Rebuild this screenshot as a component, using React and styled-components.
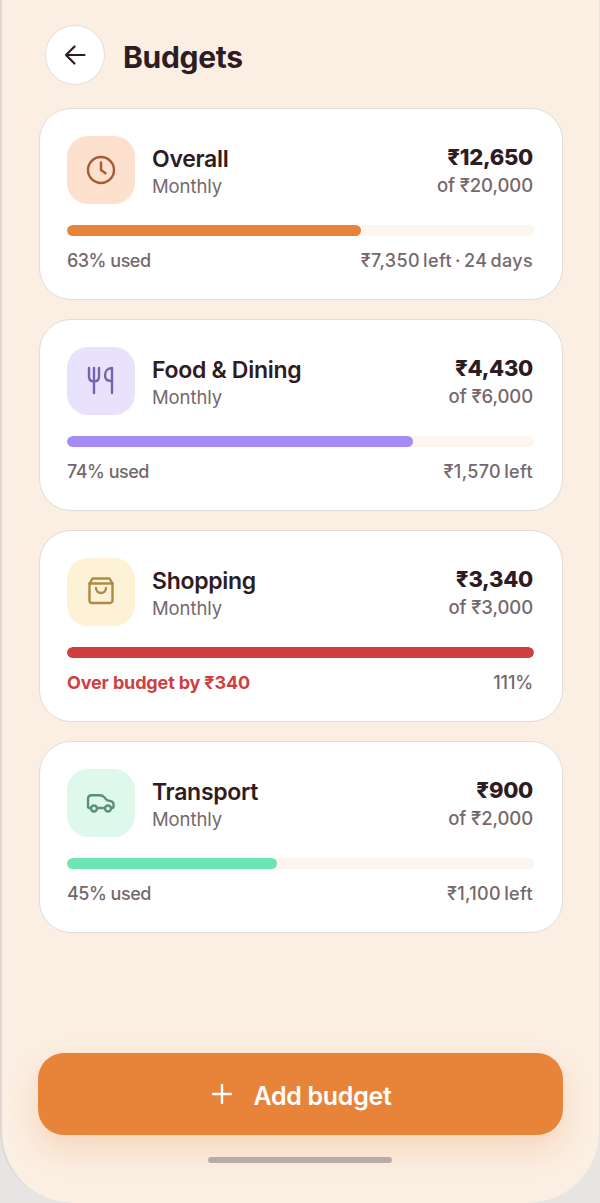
import React from "react";
import styled, { createGlobalStyle } from "styled-components";

const Global = createGlobalStyle`
  html, body { margin: 0; padding: 0; background: #e7e5e3; }
  * { box-sizing: border-box; }
`;

const Frame = styled.div`
  width: 600px;
  height: 1203px;
  background: #fbefe3;
  border-left: 2px solid #e0d9d2;
  border-right: 1px solid #ece5de;
  border-radius: 0 0 72px 72px;
  font-family: Inter, "Noto Sans", sans-serif;
  color: #2e1c23;
  display: flex;
  flex-direction: column;
  padding: 25px 36px 40px 36px;
  overflow: hidden;
`;

const Header = styled.header`
  display: flex;
  align-items: center;
  gap: 18px;
  padding-left: 7px;
  height: 60px;
`;

const BackButton = styled.button`
  width: 60px;
  height: 60px;
  border-radius: 50%;
  background: #fff;
  border: 1.5px solid #e3dfdb;
  padding: 0;
  display: flex;
  align-items: center;
  justify-content: center;
`;

const Title = styled.h1`
  margin: 3px 0 0;
  font-size: 30px;
  line-height: 36px;
  font-weight: 700;
  letter-spacing: -0.3px;
`;

const CardList = styled.div`
  margin-top: 23px;
  display: flex;
  flex-direction: column;
  gap: 19px;
`;

const Card = styled.section`
  height: 192px;
  background: #fff;
  border: 1.5px solid #e0dcd8;
  border-radius: 32px;
  margin: 0 0 0 1px;
  padding: 27px 29px 0 27px;
`;

const Top = styled.div`
  display: flex;
  align-items: center;
  height: 68px;
`;

const IconTile = styled.div`
  width: 68px;
  height: 68px;
  flex: none;
  border-radius: 21px;
  background: ${(p) => p.$bg};
  display: flex;
  align-items: center;
  justify-content: center;
`;

const Names = styled.div`
  margin-left: 17px;
  padding-top: 2px;
  flex: 1;
`;

const Name = styled.div`
  font-size: 23px;
  line-height: 28px;
  font-weight: 600;
  letter-spacing: -0.3px;
`;

const Sub = styled.div`
  margin-top: 1px;
  font-size: 18.5px;
  line-height: 24px;
  color: #75686c;
  letter-spacing: -0.1px;
`;

const Amounts = styled.div`
  text-align: right;
`;

const Amount = styled.div`
  font-size: 22px;
  line-height: 28px;
  font-weight: 800;
  letter-spacing: -0.3px;
`;

const Limit = styled.div`
  margin-top: 2px;
  font-size: 18.5px;
  line-height: 24px;
  font-weight: 500;
  color: #75686c;
  letter-spacing: -0.1px;
`;

const Track = styled.div`
  margin: 21px -1px 0 0;
  height: 11px;
  border-radius: 6px;
  background: #fdf6ef;
  overflow: hidden;
`;

const Fill = styled.div`
  height: 100%;
  border-radius: 6px;
  background: ${(p) => p.$color};
`;

const Foot = styled.div`
  margin-top: 13px;
  display: flex;
  justify-content: space-between;
  align-items: center;
  font-size: 18px;
  line-height: 24px;
  font-weight: 500;
  color: #75686c;
`;

const Used = styled.span`
  letter-spacing: -0.5px;
`;

const Over = styled.span`
  color: #cf3f3f;
  font-weight: 700;
  letter-spacing: -0.15px;
`;

const Remaining = styled.span`
  letter-spacing: 0.35px;
  word-spacing: -2px;
`;

const Percent = styled.span`
  letter-spacing: -0.15px;
`;

const AddButton = styled.button`
  margin-top: auto;
  height: 82px;
  width: 525px;
  flex: none;
  border: none;
  border-radius: 26px;
  background: #e8833a;
  color: #fff;
  font-family: inherit;
  font-size: 25px;
  font-weight: 600;
  letter-spacing: -0.3px;
  display: flex;
  align-items: center;
  justify-content: center;
  gap: 21px;
  padding: 0 0 0 3px;
  box-shadow: 0 14px 32px rgba(232, 131, 58, 0.24);
`;

const AddLabel = styled.span`
  padding-top: 3px;
`;

const HomeBar = styled.div`
  margin: 22px 0 0 170px;
  width: 184px;
  height: 6px;
  flex: none;
  border-radius: 3px;
  background: #b9aca7;
`;

const Icon = ({ color, children }) => (
  <svg width={34} height={34} viewBox="0 0 34 34" fill="none" stroke={color} strokeWidth="2.4" strokeLinecap="round" strokeLinejoin="round">
    {children}
  </svg>
);

const budgets = [
  {
    name: "Overall", amount: "₹12,650", limit: "of ₹20,000", pct: 63, bg: "#fde0cd", color: "#e8833a",
    used: "63% used", remaining: "₹7,350 left · 24 days",
    icon: (
      <Icon color="#a55b35">
        <circle cx="17" cy="17" r="13" />
        <path d="M17 9.5V17l4.500 3.200" />
      </Icon>
    ),
  },
  {
    name: "Food & Dining", amount: "₹4,430", limit: "of ₹6,000", pct: 74, bg: "#e8e2fd", color: "#a58cf5",
    used: "74% used", remaining: "₹1,570 left",
    icon: (
      <Icon color="#7763ad">
        <path d="M5 4v8.5c0 3 2 5 5 5s5-2 5-5V4M10 4v25" />
        <path d="M28 4c-4.500 0-7 3.500-7 7.500 0 3.500 2.500 5.500 6.500 5.500M28 4v25" />
      </Icon>
    ),
  },
  {
    name: "Shopping", amount: "₹3,340", limit: "of ₹3,000", pct: 100, bg: "#fef2d6", color: "#cf3f3f",
    over: "Over budget by ₹340", percent: "111%",
    icon: (
      <Icon color="#ad8a47">
        <path d="M8.500 3.500h17l3 5v17a2.500 2.500 0 0 1-2.500 2.500H8a2.500 2.500 0 0 1-2.500-2.500v-17z" />
        <path d="M5.500 8.500h23" />
        <path d="M12 13c0 3 2.200 5 5 5s5-2 5-5" />
      </Icon>
    ),
  },
  {
    name: "Transport", amount: "₹900", limit: "of ₹2,000", pct: 45, bg: "#def8ec", color: "#6ce5b5",
    used: "45% used", remaining: "₹1,100 left",
    icon: (
      <Icon color="#5b8f7a">
        <path d="M7 22H5.500C4.500 22 4 21.500 4 20.500V13c0-2.300 1.300-3.800 3.800-3.800h8c2 0 3.200.6 4.500 2l2.700 3 4.300 1.200c1.300.4 2.200 1.300 2.200 2.800v2.300c0 1-.5 1.500-1.500 1.500H27" />
        <path d="M13 22h8" />
        <circle cx="10" cy="22.500" r="3" />
        <circle cx="24" cy="22.500" r="3" />
      </Icon>
    ),
  },
];

export default function App() {
  return (
    <>
      <Global />
      <Frame>
        <Header>
          <BackButton aria-label="Back">
            <svg width="24" height="24" viewBox="0 0 24 24" fill="none" stroke="#2e1c23" strokeWidth="2.2" strokeLinecap="round" strokeLinejoin="round">
              <path d="M21.500 12H3M11.500 3.500 3 12l8.500 8.500" />
            </svg>
          </BackButton>
          <Title>Budgets</Title>
        </Header>
        <CardList>
          {budgets.map((b) => (
            <Card key={b.name}>
              <Top>
                <IconTile $bg={b.bg}>{b.icon}</IconTile>
                <Names>
                  <Name>{b.name}</Name>
                  <Sub>Monthly</Sub>
                </Names>
                <Amounts>
                  <Amount>{b.amount}</Amount>
                  <Limit>{b.limit}</Limit>
                </Amounts>
              </Top>
              <Track>
                <Fill $color={b.color} style={{ width: `${b.pct}%` }} />
              </Track>
              <Foot>
                {b.over ? <Over>{b.over}</Over> : <Used>{b.used}</Used>}
                {b.percent ? <Percent>{b.percent}</Percent> : <Remaining>{b.remaining}</Remaining>}
              </Foot>
            </Card>
          ))}
        </CardList>
        <AddButton>
          <svg width="20" height="20" viewBox="0 0 20 20" fill="none" stroke="#fff" strokeWidth="2.4" strokeLinecap="round">
            <path d="M10 1v18M1 10h18" />
          </svg>
          <AddLabel>Add budget</AddLabel>
        </AddButton>
        <HomeBar />
      </Frame>
    </>
  );
}
